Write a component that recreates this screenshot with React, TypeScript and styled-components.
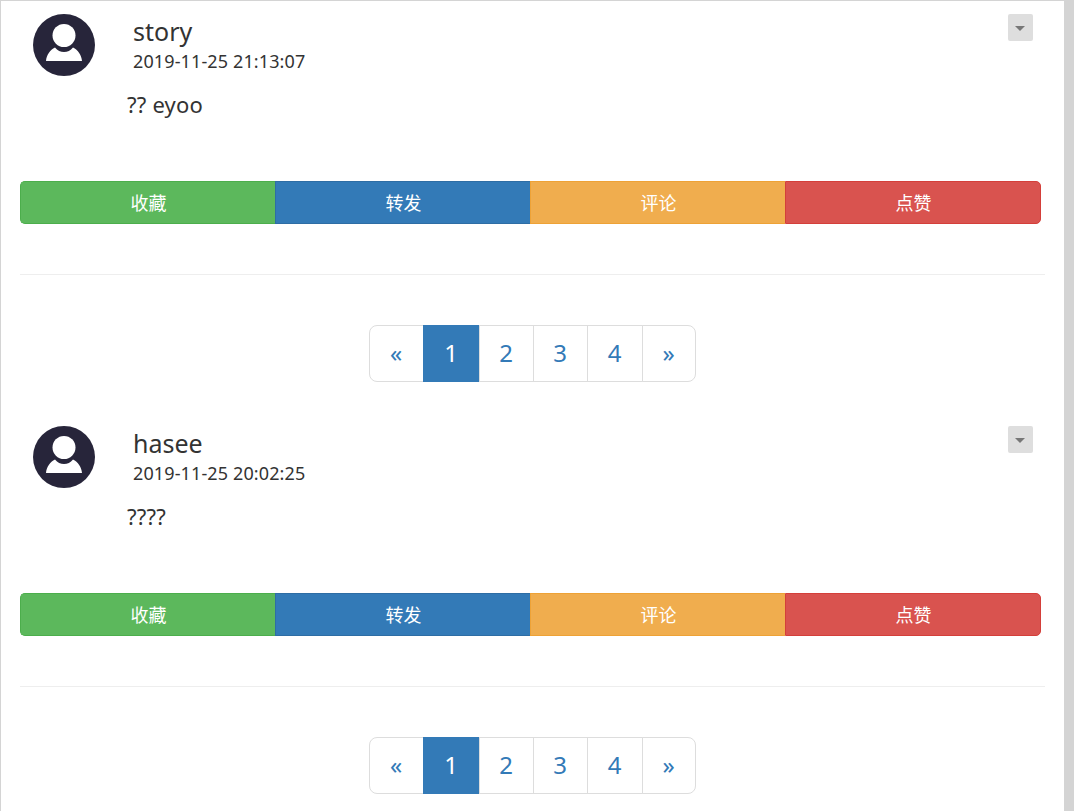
import React from "react";
import styled, { createGlobalStyle } from "styled-components";

const Global = createGlobalStyle`
  html, body { margin: 0; padding: 0; height: 100%; overflow: hidden; background: #d4d4d4; }
  * { box-sizing: border-box; }
`;

const FONT = `"Noto Sans", "Open Sans", "Noto Sans CJK SC", sans-serif`;

const Page = styled.div`
  width: 1064px;
  height: 811px;
  overflow: hidden;
  background: #fff;
  border-top: 1px solid #d4d4d4;
  border-left: 1px solid #d4d4d4;
  padding: 0 19px;
  font-family: ${FONT};
  color: #333;
`;

const Post = styled.article`
  height: 412px;
  padding-top: 13px;
`;

const Header = styled.header`
  display: flex;
  align-items: flex-start;
  padding-left: 13px;
  padding-right: 12px;
  height: 62px;
`;

const Avatar = styled.svg`
  width: 62px;
  height: 62px;
  flex: none;
  display: block;
`;

const Meta = styled.div`
  margin-left: 38px;
  flex: 1;
  padding-top: 2px;
`;

const Name = styled.div`
  font-size: 25px;
  line-height: 30px;
  color: #333;
`;

const Timestamp = styled.div`
  font-size: 18px;
  line-height: 26px;
  margin-top: 2px;
  letter-spacing: 0.12px;
  color: #333;
`;

const MenuButton = styled.button`
  width: 25px;
  height: 27px;
  flex: none;
  border: none;
  padding: 1px 1px 0 0;
  background: #dedede;
  border-radius: 2px;
  display: flex;
  align-items: center;
  justify-content: center;
  &::after {
    content: "";
    display: block;
    border-top: 5px solid #777;
    border-left: 5px solid transparent;
    border-right: 5px solid transparent;
  }
`;

const Body = styled.p`
  margin: 13px 0 0 107px;
  font-size: 22px;
  line-height: 30px;
  height: 30px;
  letter-spacing: 0.2px;
  color: #333;
`;

const Actions = styled.div`
  display: grid;
  grid-template-columns: 255px 255px 255px 256px;
  width: 1021px;
  margin-top: 62px;
`;

const palette = {
  green: ["#5cb85c", "#4cae4c"],
  blue: ["#337ab7", "#2e6da4"],
  orange: ["#f0ad4e", "#eea236"],
  red: ["#d9534f", "#d43f3a"],
};

const Action = styled.button<{ $tone: keyof typeof palette }>`
  height: 43px;
  padding: 0 0 2px 1px;
  font-family: ${FONT};
  font-size: 18px;
  color: #fff;
  background: ${(p) => palette[p.$tone][0]};
  border: 1px solid ${(p) => palette[p.$tone][1]};
  border-right-width: 0;
  &:first-child { border-radius: 5px 0 0 5px; }
  &:last-child { border-radius: 0 5px 5px 0; border-right-width: 1px; }
`;

const Rule = styled.hr`
  margin: 50px 0 0;
  border: none;
  border-top: 1px solid #eee;
  height: 0;
`;

const Pager = styled.nav`
  display: flex;
  justify-content: center;
  margin-top: 50px;
`;

const PageLink = styled.a<{ $active?: boolean; $w: number }>`
  width: ${(p) => p.$w}px;
  height: 57px;
  display: flex;
  align-items: center;
  justify-content: center;
  padding: 0 1px 2px 0;
  font-size: 24px;
  color: ${(p) => (p.$active ? "#fff" : "#337ab7")};
  background: ${(p) => (p.$active ? "#337ab7" : "#fff")};
  border: 1px solid ${(p) => (p.$active ? "#337ab7" : "#ddd")};
  margin-left: -1px;
  &:first-child { margin-left: 0; border-radius: 8px 0 0 8px; }
  &:last-child { border-radius: 0 8px 8px 0; }
`;

const UserIcon = () => (
  <Avatar viewBox="0 0 62 62">
    <circle cx="31" cy="31" r="31" fill="#27253a" />
    <circle cx="31" cy="21.5" r="11.5" fill="#fff" />
    <path
      d="M13 47 C13.5 41 17 36 22 33.5 C24.5 36.5 27.5 38 31 38 C34.5 38 37.5 36.5 40 33.5 C45 36 48.5 41 49 47 Z"
      fill="#fff"
    />
  </Avatar>
);

const pages = [
  { label: "«", w: 55 },
  { label: "1", w: 57, active: true },
  { label: "2", w: 55 },
  { label: "3", w: 55 },
  { label: "4", w: 56 },
  { label: "»", w: 54 },
];

const posts = [
  { name: "story", time: "2019-11-25 21:13:07", text: "?? eyoo" },
  { name: "hasee", time: "2019-11-25 20:02:25", text: "????" },
];

export default function App() {
  return (
    <>
      <Global />
      <Page>
        {posts.map((post) => (
          <Post key={post.name}>
            <Header>
              <UserIcon />
              <Meta>
                <Name>{post.name}</Name>
                <Timestamp>{post.time}</Timestamp>
              </Meta>
              <MenuButton aria-label="menu" />
            </Header>
            <Body>{post.text}</Body>
            <Actions>
              <Action $tone="green">收藏</Action>
              <Action $tone="blue">转发</Action>
              <Action $tone="orange">评论</Action>
              <Action $tone="red">点赞</Action>
            </Actions>
            <Rule />
            <Pager>
              {pages.map((pg) => (
                <PageLink key={pg.label} $w={pg.w} $active={pg.active}>
                  {pg.label}
                </PageLink>
              ))}
            </Pager>
          </Post>
        ))}
      </Page>
    </>
  );
}
